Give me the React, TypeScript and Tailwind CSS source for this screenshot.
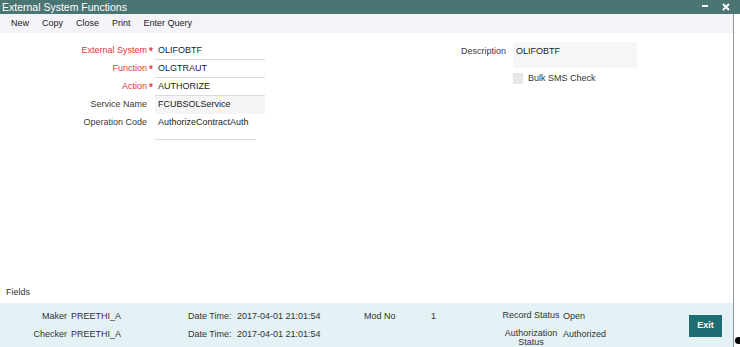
import React from "react";

const font = "font-['Liberation_Sans',Arial,sans-serif]";

function Field({
  label,
  value,
  required,
  shaded,
}: {
  label: string;
  value: string;
  required?: boolean;
  shaded?: boolean;
}) {
  return (
    <div className="flex h-[18px] items-center">
      <div className={`w-[147px] text-right ${required ? "text-[#e3323d]" : "text-[#3a3a3a]"}`}>{label}</div>
      <div className="w-[8px] pt-[1px] text-center text-[10px] font-bold text-[#e3323d]">{required ? "*" : ""}</div>
      <div
        className={`flex h-[18px] w-[110px] items-center border-b pl-[3px] text-[#222] ${
          shaded ? "border-transparent bg-[#f5f5f6]" : "border-[#dcdcdc] bg-white"
        }`}
      >
        {value}
      </div>
    </div>
  );
}

function AuditRow({
  label,
  user,
  statusLabel,
  status,
  modNo,
}: {
  label: string;
  user: string;
  statusLabel: string;
  status: string;
  modNo?: string;
}) {
  return (
    <div className="flex h-[18px] items-start leading-[18px]">
      <div className="w-[67px] text-right">{label}</div>
      <div className="ml-[4px] w-[117px]">{user}</div>
      <div className="w-[49px]">Date Time:</div>
      <div className="w-[127px]">2017-04-01 21:01:54</div>
      <div className="w-[67px]">{modNo !== undefined ? "Mod No" : ""}</div>
      <div className="w-[69px]">{modNo ?? ""}</div>
      <div className="w-[62px] pt-[4px] text-center leading-[9px]">{statusLabel}</div>
      <div className="ml-[1px]">{status}</div>
    </div>
  );
}

export default function App() {
  return (
    <div className={`relative h-[347px] w-[740px] overflow-hidden bg-white text-[9px] ${font}`}>
      {/* title bar */}
      <div className="flex h-[14px] items-center justify-between bg-[#4b7573] pl-[2px] pr-[10px] text-white">
        <span className="text-[10.5px] leading-none">External System Functions</span>
        <div className="flex items-center gap-[14px]">
          <span className="mt-[-2px] h-[2px] w-[6px] bg-white" />
          <svg width="8" height="8" viewBox="0 0 8 8">
            <path d="M1 1 L7 7 M7 1 L1 7" stroke="white" strokeWidth="1.8" />
          </svg>
        </div>
      </div>

      <div className="flex h-[333px]">
        <div className="flex w-[734px] flex-col border-r border-[#8c99a6]">
          {/* toolbar */}
          <div className="flex h-[19px] items-center gap-[13px] bg-[#f3f3f8] pl-[11px] text-[#222]">
            <span>New</span>
            <span>Copy</span>
            <span>Close</span>
            <span>Print</span>
            <span>Enter Query</span>
          </div>

          {/* form */}
          <div className="flex flex-1 pt-[9px]">
            <div className="w-[455px]">
              <Field label="External System" value="OLIFOBTF" required />
              <Field label="Function" value="OLGTRAUT" required />
              <Field label="Action" value="AUTHORIZE" required />
              <Field label="Service Name" value="FCUBSOLService" shaded />
              <div className="flex">
                <div className="w-[147px] pt-[2px] text-right text-[#3a3a3a]">Operation Code</div>
                <div className="w-[8px]" />
                <div className="h-[26px] w-[101px] border-b border-[#dcdcdc] pl-[3px] pt-[2px] text-[#222]">
                  AuthorizeContractAuth
                </div>
              </div>
            </div>
            <div>
              <div className="flex">
                <div className="w-[51px] pt-[3px] text-right text-[#3a3a3a]">Description</div>
                <div className="w-[7px]" />
                <div className="h-[26px] w-[124px] bg-[#f6f6f7] pl-[3px] pt-[3px] text-[#222]">OLIFOBTF</div>
              </div>
              <div className="mt-[4px] flex items-center">
                <div className="w-[58px]" />
                <div className="h-[11px] w-[10px] bg-[#e7e7e9]" />
                <span className="ml-[5px] text-[#333]">Bulk SMS Check</span>
              </div>
            </div>
          </div>

          {/* fields label */}
          <div className="flex h-[20px] items-center pl-[6px] text-[#333]">Fields</div>

          {/* audit footer */}
          <div className="flex h-[44px] items-center bg-[#e4f1f5] text-[#333]">
            <div className="flex flex-col self-start pt-[4px]">
              <AuditRow label="Maker" user="PREETHI_A" statusLabel="Record Status" status="Open" modNo="1" />
              <AuditRow label="Checker" user="PREETHI_A" statusLabel="Authorization Status" status="Authorized" />
            </div>
            <button className="ml-auto mr-[11px] mt-[2px] h-[22px] w-[33px] bg-[#1e6c74] text-[9px] font-bold text-white">
              Exit
            </button>
          </div>
        </div>
      </div>

      <div className="absolute left-[735px] top-[337px] h-[7px] w-[7px] rounded-full bg-black" />
    </div>
  );
}
